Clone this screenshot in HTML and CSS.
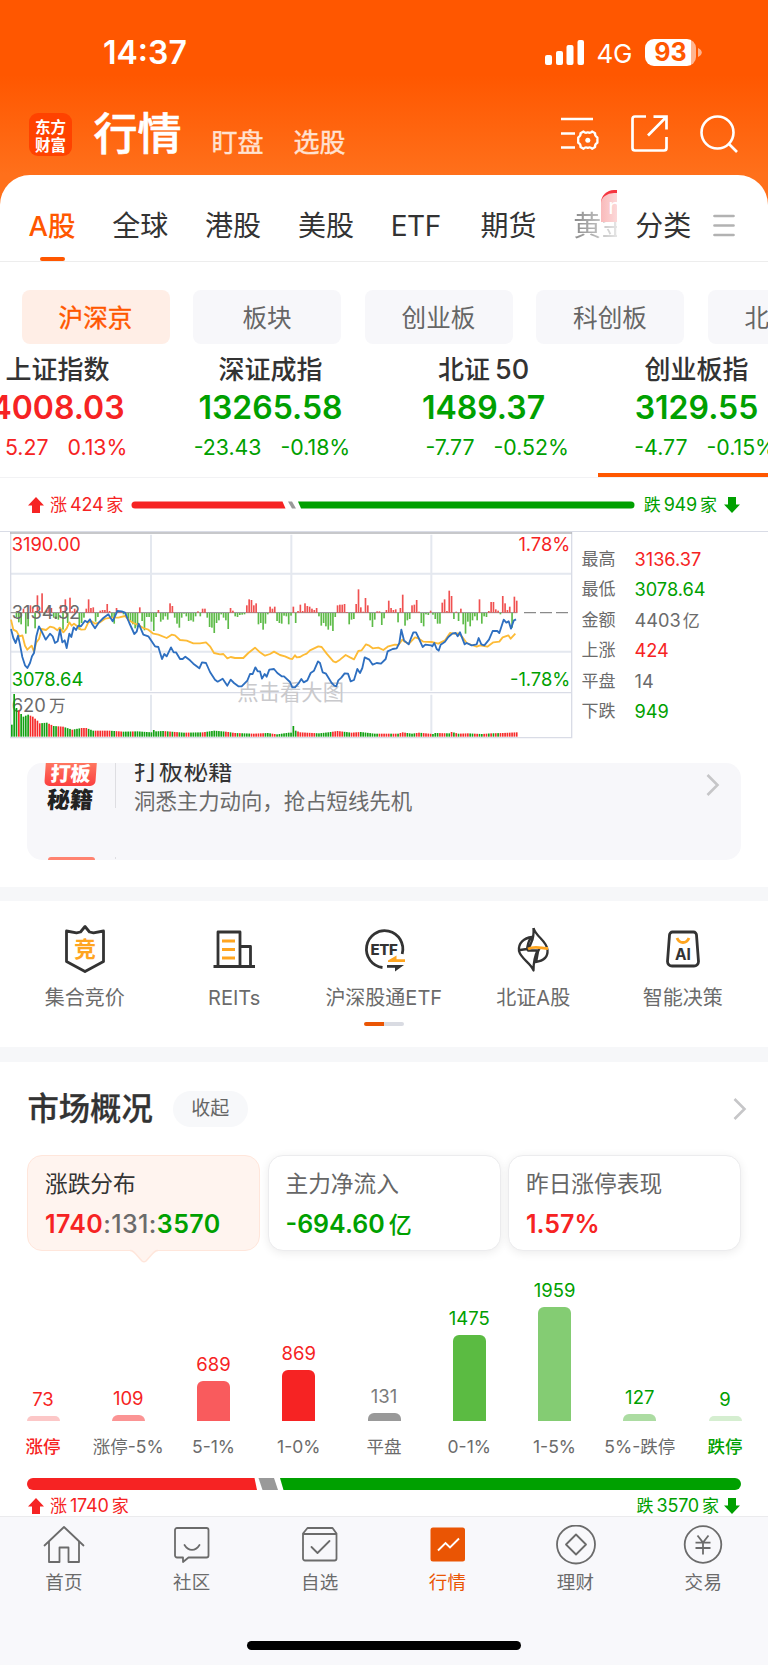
FILE: index.html
```
<!DOCTYPE html>
<html lang="zh-CN">
<head>
<meta charset="utf-8">
<title>行情</title>
<link rel="stylesheet" href="styles.css">
</head>
<body>
<div class="app">
  <header class="header">
    <div class="status">
      <span class="clock">14:37</span>
      <span class="status-right">
        <svg class="signal" width="39" height="25" viewBox="0 0 39 25" fill="#fff"><rect x="0" y="15" width="7" height="10" rx="2"/><rect x="11" y="11" width="7" height="14" rx="2"/><rect x="21.500" y="5" width="7" height="20" rx="2"/><rect x="32.500" y="0" width="6.500" height="25" rx="2"/></svg>
        <span class="net">4G</span>
        <span class="battery"><span class="battery-num">93</span></span>
        <svg class="battery-cap" width="4" height="9" viewBox="0 0 4 9"><path d="M0 0c5 2 5 7 0 9z" fill="#fff" opacity=".55"/></svg>
      </span>
    </div>
    <div class="navbar">
      <span class="logo"><b>东方</b><b>财富</b></span>
      <h1 class="nav-title">行情</h1>
      <span class="nav-item">盯盘</span>
      <span class="nav-item">选股</span>
      <span class="nav-icons">
        <svg width="39" height="36" viewBox="0 0 39 36" fill="none" stroke="#fff" stroke-width="2.600"><path d="M1 4h32M1 18.500h14M1 32.500h14"/><path stroke-width="2.300" stroke-linejoin="round" d="M23.500 16.500q1.800 2 4.300.8 2.500 1.200 4.300-.8l3 1.800q-.5 2.700 2.300 4.200v5.200q-2.800 1.300-2.300 4.200l-3 1.800q-1.800-2-4.300-.8-2.500-1.200-4.300.8l-3-1.800q.5-2.900-2.300-4.200v-5.200q2.800-1.500 2.300-4.200z"/><circle cx="27.800" cy="25.200" r="2.500" fill="#fff" stroke="none"/></svg>
        <svg width="37" height="37" viewBox="0 0 37 37" fill="none" stroke="#fff" stroke-width="2.700"><path d="M15 1.500H4a2.500 2.500 0 0 0-2.500 2.500v29A2.500 2.500 0 0 0 4 35.500h29a2.500 2.500 0 0 0 2.500-2.500V22"/><path d="M22.500 1.700h13V14.500M35 2.200L17 20.500"/></svg>
        <svg width="38" height="38" viewBox="0 0 38 38" fill="none" stroke="#fff" stroke-width="2.600"><circle cx="17.500" cy="17.500" r="16"/><path d="M28.500 28.500l8.500 8.500"/></svg>
      </span>
    </div>
  </header>

  <main class="sheet">
    <nav class="tabs">
      <span class="tab tab-on">A股</span><span class="tab">全球</span><span class="tab">港股</span><span class="tab">美股</span><span class="tab tab-en">ETF</span><span class="tab">期货</span>
      <span class="tab tab-fade">黄金<i class="new-badge">n</i></span>
      <span class="tab tab-more">分类</span>
      <svg class="menu" width="22" height="23" viewBox="0 0 22 23" stroke="#b2b2b2" stroke-width="2.700" stroke-linecap="round"><path d="M1.500 2h19M1.500 11.500h19M1.500 21h19"/></svg>
    </nav>

    <div class="chips">
      <span class="chip chip-on">沪深京</span><span class="chip">板块</span><span class="chip">创业板</span><span class="chip">科创板</span><span class="chip">北交所</span>
    </div>

    <div class="indices">
      <div class="index up"><h3>上证指数</h3><strong>4008.03</strong><p><span>5.27</span><span>0.13%</span></p></div>
      <div class="index down"><h3>深证成指</h3><strong>13265.58</strong><p><span>-23.43</span><span>-0.18%</span></p></div>
      <div class="index down"><h3>北证<em>50</em></h3><strong>1489.37</strong><p><span>-7.77</span><span>-0.52%</span></p></div>
      <div class="index down index-on"><h3>创业板指</h3><strong>3129.55</strong><p><span>-4.77</span><span>-0.15%</span></p></div>
    </div>

    <div class="breadth">
      <svg class="arrow" width="16" height="16" viewBox="0 0 16 16" fill="#f62323"><path d="M8 0l8 8.500h-4V16H4V8.500H0z"/></svg>
      <span class="count up">涨<em>424</em>家</span>
      <svg class="ratio" width="504" height="8" viewBox="0 0 504 8"><path d="M4 .5H151.500L154.500 7.500H4A3.500 3.500 0 0 1 4 .5z" fill="#f62323"/><path d="M157 .5h4l4 7h-4z" fill="#999"/><path d="M167 .5H500a3.500 3.500 0 0 1 0 7H170z" fill="#00a000"/></svg>
      <span class="count down">跌<em>949</em>家</span>
      <svg class="arrow" width="16" height="16" viewBox="0 0 16 16" fill="#00a000"><path d="M8 16l8-8.500h-4V0H4v7.500H0z"/></svg>
    </div>

    <section class="quote">
      <svg class="chart" width="576" height="210" viewBox="0 37 1728 630">
        <g fill="none" stroke-width="6" stroke="#e4e8ef">
          <path d="M32 162H1714M32 396H1714M453 45V513M453 525V651M874 45V513M874 525V651M1294 45V513M1294 525V651"/>
        </g>
        <g fill="none" stroke="#d9dce6" stroke-width="4"><path d="M32 37V654H1715V37M32 519H1715"/></g>
        <path d="M30 40H1716" stroke="#b4b6ba" stroke-width="5"/>
        <path d="M32 279H1552" stroke="#888" stroke-width="3"/>
        <path d="M1572 279H1712" stroke="#8a8a8a" stroke-width="4" stroke-dasharray="36 12"/>
        <g id="momentum"></g>
        <g class="chart-label">
          <text x="872" y="542" text-anchor="middle" font-size="64" fill="#c9c9cc">点击看大图</text>
          <text x="35" y="93" fill="#f62323">3190.00</text>
          <text x="35" y="297" fill="#6b6b6b">3134.32</text>
          <text x="35" y="499" fill="#00a000">3078.64</text>
          <text x="35" y="576" fill="#6b6b6b">620<tspan dx="10" font-size="50">万</tspan></text>
          <text x="1711" y="93" fill="#f62323" text-anchor="end">1.78%</text>
          <text x="1711" y="499" fill="#00a000" text-anchor="end">-1.78%</text>
        </g>
        <g id="volume"></g>
        <g fill="none" stroke-width="5.500" stroke-linejoin="round">
          <polyline stroke="#fdbb36" points="33,300 40,330 50,335 58,350 67,347 75,378 82,390 95,378 102,396 109,368 117,358 125,328 138,331 150,321 162,324 172,332 179,324 190,338 200,326 208,308 215,318 222,312 232,320 243,330 255,329 265,308 275,305 285,312 300,308 315,297 335,294 355,294 375,289 385,300 400,310 415,316 430,325 445,330 460,342 475,345 500,355 515,345 525,347 540,361 560,363 580,371 600,371 618,368 630,380 642,400 660,404 670,403 682,416 692,412 705,415 730,415 745,400 765,384 780,398 795,408 810,403 822,396 840,406 855,410 870,417 877,418 885,407 890,413 900,412 910,406 920,402 930,392 955,380 965,382 980,402 1000,425 1008,428 1020,420 1037,406 1050,413 1062,419 1075,394 1085,392 1098,374 1108,378 1118,386 1135,384 1150,391 1165,380 1185,375 1195,376 1207,360 1215,367 1227,372 1245,353 1255,356 1270,366 1295,367 1315,372 1335,362 1350,340 1360,342 1375,341 1387,352 1400,370 1415,376 1430,381 1440,377 1462,381 1480,368 1498,366 1508,353 1525,347 1532,357 1546,342"/>
          <polyline stroke="#2e6fc0" points="33,328 40,355 47,370 54,348 60,375 67,412 75,437 82,445 90,430 96,410 102,400 109,350 117,320 125,335 137,360 150,342 158,350 165,370 173,365 180,330 187,368 194,362 200,385 208,342 214,352 221,323 228,331 235,318 243,320 255,303 262,308 270,299 276,312 285,326 297,308 310,295 325,284 338,305 352,274 365,275 375,279 388,310 403,343 410,336 416,312 430,345 445,350 455,365 465,380 475,382 486,418 493,403 500,410 513,383 521,398 528,398 540,418 548,418 556,411 570,422 580,432 598,446 606,428 618,430 630,457 645,480 653,486 668,477 682,498 692,480 702,490 715,500 725,500 742,483 750,463 758,463 766,443 773,455 780,455 786,477 794,463 800,471 808,450 822,448 832,460 845,470 852,470 870,487 877,503 885,503 895,492 904,478 911,488 922,482 932,460 942,453 954,425 960,430 968,458 978,462 995,490 1003,498 1009,500 1015,482 1024,474 1034,461 1044,462 1052,485 1062,481 1072,448 1080,460 1087,445 1094,413 1108,420 1118,435 1130,430 1143,432 1157,418 1163,395 1178,388 1190,386 1198,370 1204,330 1212,362 1226,374 1232,358 1240,338 1248,338 1256,355 1268,382 1276,375 1293,377 1297,380 1303,370 1310,388 1316,393 1322,375 1335,366 1345,352 1358,341 1367,340 1373,350 1380,338 1394,374 1400,370 1415,377 1430,374 1436,355 1444,374 1453,377 1467,360 1478,334 1492,334 1498,340 1511,300 1519,309 1526,305 1533,327 1541,303 1548,299"/>
        </g>
      </svg>
      <dl class="stats">
        <dt>最高</dt><dd class="up">3136.37</dd>
        <dt>最低</dt><dd class="down">3078.64</dd>
        <dt>金额</dt><dd>4403<i>亿</i></dd>
        <dt>上涨</dt><dd class="up">424</dd>
        <dt>平盘</dt><dd>14</dd>
        <dt>下跌</dt><dd class="down">949</dd>
      </dl>
    </section>

    <section class="promo">
      <div class="promo-logo">
        <span class="promo-tag">打板</span>
        <span class="promo-sub">秘籍</span>
        <span class="promo-next"></span>
      </div>
      <div class="promo-text"><h4>打板秘籍</h4><p>洞悉主力动向，抢占短线先机</p></div>
      <svg class="chev" width="14" height="22" viewBox="0 0 14 22" fill="none" stroke="#c6c6c8" stroke-width="2.600"><path d="M1.500 1l10 10-10 10"/></svg>
    </section>

    <div class="band"></div>

    <section class="shortcuts">
      <div class="cut">
        <svg width="48" height="48" viewBox="0 0 48 48" fill="none" stroke="#333" stroke-width="2.800" stroke-linejoin="round"><path d="M24 1.500l-4.500 5.500-4 .8L5.500 6v30.500L24 46.500l18.500-10V6l-10 1.800-4-.8z"/><text x="24" y="32" text-anchor="middle" class="glyph-jing">竞</text></svg>
        <span>集合竞价</span></div>
      <div class="cut">
        <svg width="48" height="48" viewBox="0 0 48 48" fill="none" stroke="#333" stroke-width="2.800"><path d="M3.500 41.500h41.500M8 41.500V7h22v34.500M30 21.500h10.500v20" stroke-linejoin="round"/><path d="M12 16h13M12 24.500h13M12 33h13" stroke="#ffa51f"/></svg>
        <span>REITs</span></div>
      <div class="cut">
        <svg width="48" height="48" viewBox="0 0 48 48" fill="none" stroke="#333" stroke-width="2.800"><path d="M22.500 42.500A18.200 18.500 0 1 1 42.200 29"/><text x="24" y="29.500" text-anchor="middle" class="glyph-etf">ETF</text><path d="M28 35.500l8.500-5v3.700h8.500v2.800H28z" fill="#ffa51f" stroke="none"/><path d="M44 40H27v2.800h8v3.700z" fill="#333" stroke="none"/></svg>
        <span>沪深股通ETF</span></div>
      <div class="cut">
        <svg width="48" height="48" viewBox="0 0 48 48" fill="none" stroke="#333" stroke-width="2.300" stroke-linejoin="round"><path d="M24.500 3C27 12 38 16 38.500 25c.5 7-4 11-12 12 3-5 .5-8 4-13.500M24.500 3c.5 8-1 12-2 14l-3.500 8.500h9.500c-3 6-4 12-4 20C22 38 12 34 10 26c-1-8 5-13 13-14-4 3-4 8-5 12l-7 1"/><path d="M19 24c6-3.500 12-1 20-.5" stroke="#ffa51f" stroke-width="2.800"/></svg>
        <span>北证A股</span></div>
      <div class="cut">
        <svg width="48" height="48" viewBox="0 0 48 48" fill="none" stroke="#333" stroke-width="2.800"><path d="M13.500 7h21a3 3 0 0 1 3 3l2 26.500a4.500 4.500 0 0 1-4.500 4.500H13a4.500 4.500 0 0 1-4.500-4.500l2-26.500a3 3 0 0 1 3-3z"/><path d="M18 13c2.500 6 9.500 6 12 0" stroke="#ffa51f"/><text x="24" y="35" text-anchor="middle" class="glyph-ai">AI</text></svg>
        <span>智能决策</span></div>
      <i class="pager"></i>
    </section>

    <div class="band band-2"></div>

    <section class="market">
      <div class="market-head">
        <h2>市场概况</h2><span class="fold">收起</span>
        <svg width="14" height="22" viewBox="0 0 14 22" fill="none" stroke="#c6c6c8" stroke-width="2.600"><path d="M1.500 1l10 10-10 10"/></svg>
      </div>
      <div class="cards">
        <div class="card card-on"><h4>涨跌分布</h4><p><span class="up">1740</span><span class="mid">:131:</span><span class="down">3570</span></p>
          <svg class="notch" width="28" height="14" viewBox="0 0 28 14"><path d="M0 0h28v1.500c-4 0-5 3-12 10.500q-2 1.500-4 0C5 4.500 4 1.500 0 1.500z" fill="#fff4ef"/><path d="M0 1.500c4 0 5 3 12 10.500q2 1.500 4 0C23 4.500 24 1.500 28 1.500" fill="none" stroke="#ffe6db" stroke-width="1.500"/></svg>
        </div>
        <div class="card"><h4>主力净流入</h4><p class="down">-694.60<i>亿</i></p></div>
        <div class="card"><h4>昨日涨停表现</h4><p class="up">1.57%</p></div>
      </div>
      <div class="dist" id="dist"></div>
      <svg class="ratio-wide" width="714" height="12" viewBox="0 0 714 12"><path d="M6 0H227.500L230 12H6A6 6 0 0 1 6 0z" fill="#f62323"/><path d="M231.500 0h15.500l4 12h-15.500z" fill="#999"/><path d="M253 0H708a6 6 0 0 1 0 12H256.500z" fill="#00a000"/></svg>
      <div class="totals">
        <svg class="arrow" width="16" height="16" viewBox="0 0 16 16" fill="#f62323"><path d="M8 0l8 8.500h-4V16H4V8.500H0z"/></svg>
        <span class="count up">涨<em>1740</em>家</span>
        <span class="count down count-r">跌<em>3570</em>家</span>
        <svg class="arrow" width="16" height="16" viewBox="0 0 16 16" fill="#00a000"><path d="M8 16l8-8.500h-4V0H4v7.500H0z"/></svg>
      </div>
    </section>
  </main>

  <footer class="tabbar">
    <div class="tabbar-row">
      <div class="tb"><svg width="42" height="40" viewBox="0 0 42 40" fill="none" stroke="#6b6b6b" stroke-width="1.800" stroke-linejoin="round" stroke-linecap="round"><path d="M1.500 20.500L21 2l19.500 18.500M6 16.500v20.500h10.500V22.500h9V37H36V16.500"/></svg><span>首页</span></div>
      <div class="tb"><svg width="42" height="40" viewBox="0 0 42 40" fill="none" stroke="#6b6b6b" stroke-width="1.800" stroke-linejoin="round" stroke-linecap="round"><path d="M6 3h29.500a2 2 0 0 1 2 2v25.500a2 2 0 0 1-2 2H17.500L12 37v-4.500H6a2 2 0 0 1-2-2V5a2 2 0 0 1 2-2zM13.500 20c4 6.500 11 6.500 15 0"/></svg><span>社区</span></div>
      <div class="tb"><svg width="42" height="40" viewBox="0 0 42 40" fill="none" stroke="#6b6b6b" stroke-width="1.800" stroke-linejoin="round" stroke-linecap="round"><path d="M4 8.500L8.500 3h25L37.500 8.500V33.500a2 2 0 0 1-2 2H6a2 2 0 0 1-2-2zM4 9h33.500M12.500 22l6 6L30.500 16"/></svg><span>自选</span></div>
      <div class="tb tb-on"><svg width="42" height="40" viewBox="0 0 42 40"><rect x="3.500" y="2.500" width="34.500" height="34" rx="2.500" fill="#ea5504"/><path d="M11 25.500l7.500-7.500 4.500 4.500 9-9" fill="none" stroke="#fff" stroke-width="1.900"/></svg><span>行情</span></div>
      <div class="tb"><svg width="42" height="40" viewBox="0 0 42 40" fill="none" stroke="#6b6b6b" stroke-width="1.800" stroke-linejoin="round"><circle cx="21" cy="19.500" r="19"/><path d="M21 9.500l10 10-10 10-10-10z"/></svg><span>理财</span></div>
      <div class="tb"><svg width="42" height="40" viewBox="0 0 42 40" fill="none" stroke="#6b6b6b" stroke-width="1.800"><circle cx="21" cy="19.500" r="18.300"/><path d="M15.500 10.500L21 17.500l5.500-7M21 17.500V29.500M13.500 17.700h15M13.500 23h15"/></svg><span>交易</span></div>
    </div>
    <i class="home-bar"></i>
  </footer>
</div>
<script src="chart.js"></script>
</body>
</html>
```
FILE: styles.css
```
* { box-sizing: border-box; margin: 0; padding: 0; }
em, i { font-style: normal; }
body {
  width: 768px; height: 1665px; overflow: hidden; background: #fff; color: #333;
  font-family: Inter, "Noto Sans CJK SC", sans-serif;
}
svg { display: block; flex: none; }
.up { color: #f62323; }
.down { color: #00a000; }
.app { width: 768px; height: 1665px; display: flex; flex-direction: column; background: linear-gradient(#ff5700 0, #ff5700 75px, #ff701b 175px, #ff701b 210px, #fff 211px); }

.header { height: 175px; flex: none; }
.status { height: 104px; display: flex; align-items: center; padding: 1px 66px 0 103px; color: #fff; }
.clock { font-size: 32px; font-weight: 600; line-height: 40px; }
.status-right { margin-left: auto; display: flex; align-items: center; }
.net { font-size: 26px; margin: 3px 13px 0 12px; line-height: 30px; letter-spacing: -.3px; }
.battery { width: 51px; height: 27px; border-radius: 9px; background: linear-gradient(90deg, #fff 46px, #ffb590 46px); display: flex; justify-content: center; align-items: center; color: #ff5700; margin-right: 2px; }
.battery-num { font-size: 25px; font-weight: 700; line-height: 27px; }
.navbar { height: 71px; display: flex; padding: 0 30px 0 29px; color: #fff; }
.logo { width: 43px; height: 43px; margin-top: 9px; border-radius: 9px; background: #ff4200; display: flex; flex-direction: column; align-items: center; justify-content: center; font-size: 15.500px; line-height: 18px; font-family: "Noto Sans CJK SC", sans-serif; }
.logo b { font-weight: 700; }
.nav-title { font-size: 44px; font-weight: 500; line-height: 60px; margin-left: 21.500px; -webkit-text-stroke: .6px #fff; }
.nav-item { font-size: 26px; line-height: 40px; margin: 19px 0 0 30px; color: #ffe2d2; -webkit-text-stroke: .4px #ffe2d2; }
.nav-icons { margin: 11px 0 0 auto; display: flex; gap: 32px; }

.sheet { height: 1341px; flex: none; background: #fff; border-radius: 30px 30px 0 0; overflow: hidden; }
.tabs { height: 87px; border-bottom: 1.500px solid #ededed; display: flex; padding: 0 32px 0 28.500px; gap: 36.800px; position: relative; }
.tab { font-size: 28px; line-height: 40px; padding-top: 31px; white-space: nowrap; flex: none; }
.tab-on { color: #ff5700; font-weight: 500; width: 47px; font-size: 27.500px; display: flex; flex-direction: column; align-items: center; }
.tab-on::after { content: ""; width: 25px; height: 4px; border-radius: 2px; background: #ff5700; margin-top: 11px; }
.tab-en { width: 53px; letter-spacing: -.5px; }
.tab-fade { width: 44px; overflow: hidden; position: relative; background: linear-gradient(90deg, #888 0, #fff 56px); -webkit-background-clip: text; background-clip: text; color: transparent; }
.new-badge { position: absolute; left: 28px; top: 15px; width: 40px; height: 32px; border-radius: 13px 0 0 0; border-top: 3px solid #f5353f; background: linear-gradient(90deg, #f9babb, #fde0e0 20px); color: #fff; font-size: 22px; line-height: 26px; padding-left: 7px; }
.tab-more { margin-left: -19px; }
.menu { margin: 39px 0 0 -15px; }

.chips { display: flex; gap: 23.500px; padding: 28px 0 0 21.500px; height: 83px; overflow: hidden; }
.chip { width: 148px; height: 53.500px; flex: none; border-radius: 8px; background: #f7f7fa; color: #666; font-size: 24.600px; line-height: 53px; padding-top: 1.500px; text-align: center; }
.chip-on { background: #ffeee6; color: #ff5700; -webkit-text-stroke: .4px #ff5700; }

.indices { display: flex; height: 133px; margin-left: -49px; border-bottom: 1.500px solid #f2f2f4; }
.index { width: 213px; flex: none; text-align: center; display: flex; flex-direction: column; padding-top: 5px; }
.index h3 { font-size: 26px; font-weight: 500; line-height: 40px; color: #333; }
.index h3 em { margin-left: 5px; font-size: 27px; }
.index strong { font-size: 32px; font-weight: 600; line-height: 36px; }
.index p { display: grid; grid-template-columns: 1fr 1fr; gap: 19px; font-size: 21.300px; line-height: 30px; margin-top: 6px; padding-left: 1px; }
.index p span:first-child { text-align: right; }
.index p span:last-child { text-align: left; white-space: nowrap; }
.index-on::after { content: ""; height: 4px; margin: auto 0 0 8px; background: #ff5700; }

.breadth { height: 53px; display: flex; align-items: center; padding: 0 28px 0 28px; }
.count { font-size: 17px; line-height: 24px; margin-left: 6px; white-space: nowrap; }
.count em { margin: 0 3px; font-size: 18px; letter-spacing: -.2px; }
.breadth .ratio { margin: 0 3px 0 auto; }
.breadth .arrow:last-child { margin-left: 7px; }

.quote { height: 232px; border-top: 1.500px solid #d9dce6; display: flex; }
.chart-label { font: 55px Inter, "Noto Sans CJK SC", sans-serif; }
.stats { display: grid; grid-template-columns: 53px auto; grid-auto-rows: 30.400px; padding-top: 12px; margin-left: 5.500px; font-size: 17px; line-height: 30px; color: #6b6b6b; align-content: start; }
.stats dd { font-size: 18.200px; }
.stats dd.up { color: #f62323; }
.stats dd.down { color: #00a000; }
.stats dd i { margin-left: 2px; font-size: 17px; }

.promo { height: 96.500px; margin: 0 27px; border-radius: 15px; background: #f7f7fa; display: flex; overflow: hidden; }
.promo-logo { width: 89px; height: 97px; display: flex; flex-direction: column; align-items: flex-start; padding-left: 18px; position: relative; }
.promo-logo::after { content: ""; position: absolute; right: 0; top: 0; width: 1.500px; height: 96px; background: linear-gradient(#dedee2 45px, transparent 45px, transparent 94px, #dedee2 94px); }
.promo-tag { width: 51px; height: 23px; background: linear-gradient(#ff7660, #fb3f3f); color: #fff; border-radius: 0 0 5px 5px; font-size: 20px; font-weight: 900; line-height: 22px; text-align: center; transform: skewX(-4deg); }
.promo-sub { color: #222; font-size: 23px; font-weight: 900; line-height: 28px; margin-left: 2px; transform: skewX(-4deg); }
.promo-next { width: 47px; height: 4px; border-radius: 3px 3px 0 0; background: #ff8370; margin: auto 0 -1px 3px; }
.promo-text { margin-left: 18px; }
.promo-text h4 { font-size: 24.700px; font-weight: 400; line-height: 36px; margin-top: -10px; }
.promo-text p { font-size: 21.400px; line-height: 30px; color: #6b6b6b; margin-top: -3px; white-space: nowrap; }
.chev { margin: 11px 21px 0 auto; }

.band { height: 14px; margin-top: 27.500px; background: #f6f7f9; }
.band-2 { margin-top: 0; height: 15px; }
.shortcuts { height: 146px; padding: 24px 10px 0; display: grid; grid-template-columns: repeat(5, 149.500px); grid-template-rows: 97px 4px; }
.cut { display: flex; flex-direction: column; align-items: center; font-size: 20px; line-height: 28px; color: #6b6b6b; gap: 11px; white-space: nowrap; }
.glyph-jing { font: 700 22px "Noto Sans CJK SC", sans-serif; fill: #ffa51f; stroke: none; }
.glyph-etf { font: 800 15px Inter, sans-serif; fill: #333; stroke: none; letter-spacing: -.3px; }
.glyph-ai { font: 700 15.500px Inter, sans-serif; fill: #333; stroke: none; }
.pager { grid-column: 3; width: 40px; height: 4px; border-radius: 2px; justify-self: center; background: linear-gradient(90deg, #ea5504 20px, #d9dbe2 20px); }

.market { height: 455px; padding: 0 27px; overflow: hidden; }
.market-head { height: 93px; display: flex; align-items: center; }
.market-head h2 { font-size: 31.300px; font-weight: 500; line-height: 44px; margin-left: .5px; -webkit-text-stroke: .3px #333; }
.fold { width: 75px; height: 36px; border-radius: 18px; background: #f7f8fa; margin-left: 20px; font-size: 19px; line-height: 35px; color: #666; text-align: center; }
.market-head svg { margin: 0 -6px 0 auto; }
.cards { display: grid; grid-template-columns: 233px 233px 233px; gap: 7.500px; height: 96px; }
.card { border-radius: 15px; background: #fff; border: 1.500px solid #ececee; box-shadow: 0 2px 10px rgba(0,0,0,.08); padding: 10px 17px 0; position: relative; color: #666; }
.card h4 { font-size: 22.700px; font-weight: 400; line-height: 36px; }
.card p { font-size: 25px; font-weight: 600; line-height: 34px; margin-top: 5px; }
.card p i { margin-left: 4px; font-size: 23px; font-weight: 500; }
.card .mid { font-weight: 500; }
.card-on { background: #fff4ef; border-color: #ffe6db; box-shadow: none; color: #333; }
.card-on p { letter-spacing: .4px; }
.card-on .mid { color: #6b6b6b; }
.notch { position: absolute; left: 102px; top: 92.500px; }
.dist { display: flex; height: 227px; margin: 0 -27px; padding: 18px 0 0; justify-content: center; }
.col { width: 85.250px; flex: none; height: 190px; display: flex; flex-direction: column; align-items: center; justify-content: flex-end; font-size: 18.500px; line-height: 24px; white-space: nowrap; }
.bar { width: 33px; flex: none; border-radius: 6px 6px 0 0; margin-top: 5px; }
.cap { margin-top: 14px; font-size: 17.500px; color: #6b6b6b; }
.cap-up { color: #f62323; font-weight: 500; }
.cap-down { color: #00a000; font-weight: 500; }
.flat { color: #7b7b7b; }
.totals { display: flex; align-items: center; height: 32px; padding: 0 1px; }
.totals .count-r { margin: 0 5px 0 auto; }

.tabbar { height: 149px; flex: none; background: #f8f8fb; border-top: 1.500px solid #ebebed; display: flex; flex-direction: column; align-items: center; }
.tabbar-row { display: flex; height: 124px; padding-top: 8px; width: 768px; }
.tb { width: 127.900px; display: flex; flex-direction: column; align-items: center; font-size: 18.500px; line-height: 26px; color: #6b6b6b; letter-spacing: .3px; gap: 4px; }
.tb-on { color: #ea5504; }
.home-bar { width: 274px; height: 9px; border-radius: 5px; background: #000; }
```
FILE: chart.js
```
const NS = "http://www.w3.org/2000/svg";
const PITCH = 6.98;
const START = 33;

function addBar(parent, x, y, height, fill) {
  const r = document.createElementNS(NS, "rect");
  r.setAttribute("x", x);
  r.setAttribute("y", y);
  r.setAttribute("width", 5);
  r.setAttribute("height", height);
  r.setAttribute("fill", fill);
  parent.appendChild(r);
}

// Minute-by-minute momentum: positive values rise above the mid line.
const momentum = [0,0,-12,-28,-34,12,-62,-40,22,14,-46,52,5,58,-5,8,22,14,-14,-18,-20,22,-50,40,-30,45,4,12,6,-50,-30,-14,12,40,14,16,-26,-12,6,8,8,26,5,-15,-32,14,4,3,-4,-12,-22,-26,-34,-46,-42,16,-24,-52,-12,-12,-26,-54,-12,8,-26,-20,-10,-20,28,20,-14,-32,-44,-14,-2,-10,-24,-22,-26,-10,4,-10,12,12,-14,-42,-44,-60,-30,-22,-4,-14,-22,-48,14,6,-10,-12,-6,-5,-4,22,40,38,22,28,-34,-30,-50,-32,-4,18,12,18,-24,-30,-32,-8,-10,-34,-8,18,-30,5,24,5,28,20,18,12,8,14,-10,-38,-30,-40,-50,-38,-54,-12,22,24,24,26,2,-34,-20,-18,26,70,16,3,44,22,-22,-42,-20,4,4,-36,-16,8,36,14,8,10,-28,14,54,-38,-22,-18,22,24,38,3,-30,-40,-4,-6,6,-5,-18,-32,-32,30,40,5,66,50,-18,3,-24,12,-34,-62,-26,-40,-22,-10,-22,40,-32,-10,-12,5,32,32,10,6,-4,50,28,8,18,-44,48,36];
const momentumLayer = document.getElementById("momentum");
momentum.forEach((v, i) => {
  if (v > 0) addBar(momentumLayer, START + i * PITCH, 279 - v, v, "#f05151");
  if (v < 0) addBar(momentumLayer, START + i * PITCH, 280, -v, "#5dbb48");
});

// Volume heights as [minute, height] anchors, joined linearly.
const anchors = [[0,36],[1,128],[2,86],[3,78],[4,68],[5,60],[7,66],[9,60],[11,48],[12,40],[15,42],[18,32],[22,30],[26,21],[30,26],[32,26],[35,18],[42,18],[48,15],[54,16],[60,13],[61,20],[62,16],[65,17],[74,12],[82,13],[87,18],[92,15],[96,11],[104,9],[110,11],[114,7],[119,12],[120,12],[121,32],[122,18],[124,13],[132,10],[136,13],[140,17],[146,12],[150,14],[156,9],[166,9],[168,13],[172,9],[175,12],[181,8],[182,11],[188,10],[189,14],[192,9],[196,10],[202,8],[206,10],[211,11],[217,13]];
const tones = "gggrggggrrrrrgggrrggrrrgggrgggrrrgggrrrrrrrggrrrggggrggg" +
  "ggggggggggrgrgrrgggrrgggggrrggggggggrrgrrgrggggrrrrrrgggrrgggggg" +
  "gggrrrrrrrrgggggggrrrrrgggrrrrggggggggrrrrrgrrgrrrggggrrgrrrrggg" +
  "rrrggrgrgrrrrggrrggrrgrgrgrrrrrrrr";
const volumeLayer = document.getElementById("volume");
for (let i = 0, k = 0; i < momentum.length; i++) {
  while (k < anchors.length - 2 && i > anchors[k + 1][0]) k++;
  const [a, ha] = anchors[k], [b, hb] = anchors[k + 1];
  const h = ha + (hb - ha) * (i - a) / (b - a);
  addBar(volumeLayer, START + i * PITCH, 651 - h, h, tones[i] === "r" ? "#f62a2a" : "#12a012");
}

const groups = [
  ["73", "涨停", 5.5, "#fcc7c7", "up", "cap-up"],
  ["109", "涨停-5%", 6.5, "#fb9494", "up", ""],
  ["689", "5-1%", 40.5, "#f95b5d", "up", ""],
  ["869", "1-0%", 51, "#f62323", "up", ""],
  ["131", "平盘", 8, "#999", "flat", ""],
  ["1475", "0-1%", 86, "#5bbb42", "down", ""],
  ["1959", "1-5%", 114.5, "#84cc73", "down", ""],
  ["127", "5%-跌停", 7.5, "#acdca2", "down", ""],
  ["9", "跌停", 5.5, "#d5eed0", "down", "cap-down"]
];
document.getElementById("dist").innerHTML = groups.map(([n, label, h, color, tone, cap]) =>
  `<div class="col"><span class="${tone}">${n}</span><div class="bar" style="height:${h}px;background:${color}"></div><span class="cap ${cap}">${label}</span></div>`
).join("");
```
